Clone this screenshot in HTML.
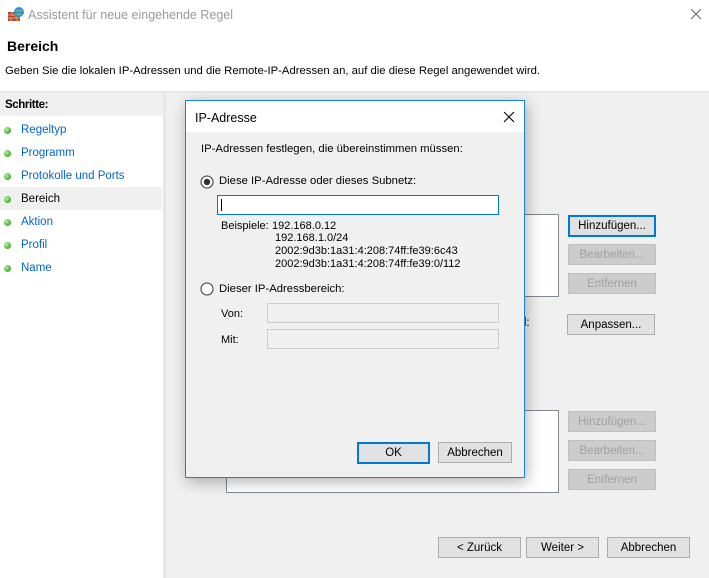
<!DOCTYPE html><html><head><style>
*{box-sizing:border-box;margin:0;padding:0}
body{width:709px;height:578px;overflow:hidden;background:#f0f0f0;font-family:"Liberation Sans",sans-serif;font-size:11.5px;color:#000;position:relative}
.a{position:absolute;white-space:nowrap}
.btn{position:absolute;background:#e1e1e1;border:1px solid #adadad;text-align:center;line-height:20px;font-size:11.5px}
.dis{background:#cccccc;border-color:#bfbfbf;color:#a0a0a0}
.dot{position:absolute;left:4px;width:7px;height:7px;border-radius:50%;background:radial-gradient(circle at 35% 35%,#b8f0a0,#3fae2a 70%)}
.st{position:absolute;left:21px;color:#0066cc}
</style></head><body>
<div class="a" style="left:0;top:0;width:709px;height:91px;background:#fff"></div>
<div class="a" style="left:0;top:91px;width:709px;height:2px;background:#e6e6e6"></div>
<svg class="a" style="left:7px;top:6px" width="18" height="16"><rect x="1" y="6" width="12" height="9" fill="#b04a2a"/><path d="M1 9h12M1 12h12M5 6v3M9 9v3M4 12v3M10 12v3" stroke="#e8a080" stroke-width="1"/><circle cx="12" cy="6" r="5" fill="#3a8fd8"/><path d="M9 4q3 2 6 0M10 8q2 1 4 0" stroke="#7fd07f" fill="none"/></svg>
<div class="a" style="left:28px;top:8px;color:#999;font-size:12.5px">Assistent für neue eingehende Regel</div>
<svg class="a" style="left:690px;top:8px" width="12" height="12"><path d="M1 1L11 11M11 1L1 11" stroke="#666" stroke-width="1"/></svg>
<div class="a" style="left:7px;top:38px;font-weight:bold;font-size:14px">Bereich</div>
<div class="a" style="left:5px;top:65px;font-size:11.3px">Geben Sie die lokalen IP-Adressen und die Remote-IP-Adressen an, auf die diese Regel angewendet wird.</div>
<div class="a" style="left:0;top:94px;width:163px;height:484px;background:#fff"></div>
<div class="a" style="left:0;top:94px;width:163px;height:22px;background:#f0f0f0"></div>
<div class="a" style="left:5px;top:99px;font-weight:bold;letter-spacing:-0.4px">Schritte:</div>
<div class="a" style="left:0;top:187px;width:162px;height:23px;background:#f0f0f0"></div>
<div class="dot" style="top:127px"></div><div class="st" style="top:124px">Regeltyp</div>
<div class="dot" style="top:150px"></div><div class="st" style="top:147px">Programm</div>
<div class="dot" style="top:173px"></div><div class="st" style="top:170px">Protokolle und Ports</div>
<div class="dot" style="top:196px"></div><div class="st" style="top:193px;color:#000">Bereich</div>
<div class="dot" style="top:219px"></div><div class="st" style="top:216px">Aktion</div>
<div class="dot" style="top:242px"></div><div class="st" style="top:239px">Profil</div>
<div class="dot" style="top:265px"></div><div class="st" style="top:262px">Name</div>
<div class="a" style="left:163px;top:94px;width:3px;height:484px;background:#e6e6e6"></div>
<div class="a" style="left:226px;top:214px;width:333px;height:83px;background:#fff;border:1px solid #828790"></div>
<div class="a" style="left:226px;top:410px;width:333px;height:83px;background:#fff;border:1px solid #828790"></div>
<div class="btn" style="left:568px;top:215px;width:88px;height:22px;border:2px solid #0078d7;line-height:18px">Hinzufügen...</div>
<div class="btn dis" style="left:568px;top:244px;width:88px;height:21px">Bearbeiten...</div>
<div class="btn dis" style="left:568px;top:273px;width:88px;height:21px">Entfernen</div>
<div class="a" style="left:520px;top:317px">d:</div>
<div class="btn" style="left:567px;top:314px;width:88px;height:21px">Anpassen...</div>
<div class="btn dis" style="left:568px;top:411px;width:88px;height:21px">Hinzufügen...</div>
<div class="btn dis" style="left:568px;top:440px;width:88px;height:21px">Bearbeiten...</div>
<div class="btn dis" style="left:568px;top:469px;width:88px;height:21px">Entfernen</div>
<div class="btn" style="left:438px;top:537px;width:83px;height:21px">&lt; Zurück</div>
<div class="btn" style="left:526px;top:537px;width:73px;height:21px">Weiter &gt;</div>
<div class="btn" style="left:607px;top:537px;width:83px;height:21px">Abbrechen</div>
<div class="a" style="left:185px;top:100px;width:340px;height:378px;background:#f0f0f0;border:1px solid #1883d7;box-shadow:2px 4px 14px rgba(0,0,0,0.3)">
<div class="a" style="left:0;top:0;width:338px;height:31px;background:#fff"></div>
<div class="a" style="left:9px;top:10px;font-size:12.5px">IP-Adresse</div>
<svg class="a" style="left:317px;top:10px" width="12" height="12"><path d="M1 1L11 11M11 1L1 11" stroke="#000" stroke-width="1.1"/></svg>
<div class="a" style="left:15px;top:42px;font-size:11.3px">IP-Adressen festlegen, die übereinstimmen müssen:</div>
<svg class="a" style="left:14px;top:74px" width="14" height="14"><circle cx="7" cy="7" r="6" fill="#fff" stroke="#333"/><circle cx="7" cy="7" r="3.2" fill="#333"/></svg>
<div class="a" style="left:33px;top:74px;font-size:11.3px">Diese IP-Adresse oder dieses Subnetz:</div>
<div class="a" style="left:31px;top:94px;width:282px;height:20px;background:#fff;border:1px solid #0078d7"></div>
<div class="a" style="left:35px;top:98px;width:1px;height:12px;background:#000"></div>
<div class="a" style="left:35px;top:119px;font-size:11px">Beispiele:</div>
<div class="a" style="left:86px;top:119px;font-size:11px">192.168.0.12</div>
<div class="a" style="left:89px;top:131px;font-size:11px">192.168.1.0/24</div>
<div class="a" style="left:89px;top:144px;font-size:11px">2002:9d3b:1a31:4:208:74ff:fe39:6c43</div>
<div class="a" style="left:89px;top:157px;font-size:11px">2002:9d3b:1a31:4:208:74ff:fe39:0/112</div>
<svg class="a" style="left:14px;top:181px" width="14" height="14"><circle cx="7" cy="7" r="6" fill="#fff" stroke="#333"/></svg>
<div class="a" style="left:33px;top:182px;font-size:11.3px">Dieser IP-Adressbereich:</div>
<div class="a" style="left:35px;top:207px;font-size:11px">Von:</div>
<div class="a" style="left:81px;top:202px;width:232px;height:20px;border:1px solid #ccc"></div>
<div class="a" style="left:35px;top:233px;font-size:11px">Mit:</div>
<div class="a" style="left:81px;top:228px;width:232px;height:20px;border:1px solid #ccc"></div>
<div class="btn" style="left:171px;top:341px;width:73px;height:22px;border:2px solid #0078d7;line-height:18px">OK</div>
<div class="btn" style="left:252px;top:341px;width:74px;height:21px">Abbrechen</div>
</div>
</body></html>
